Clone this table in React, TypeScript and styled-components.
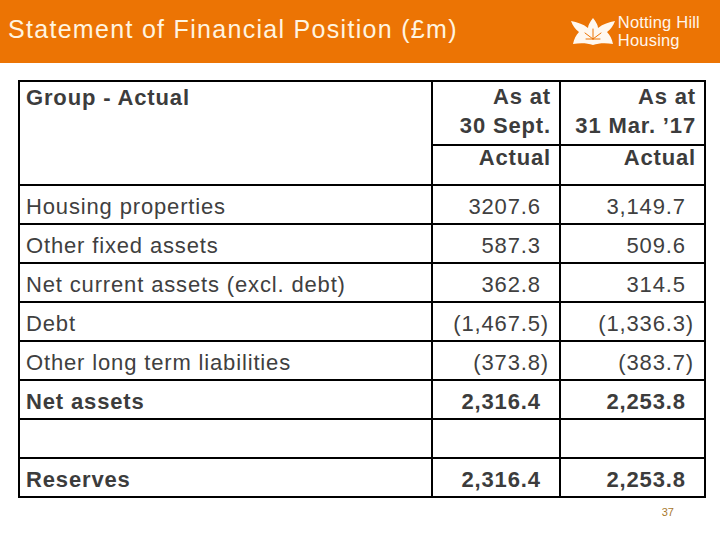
import styled, { createGlobalStyle } from 'styled-components';

const GlobalStyle = createGlobalStyle`
  html, body {
    margin: 0;
    padding: 0;
    background: #ffffff;
  }
`;

const Page = styled.div`
  width: 720px;
  height: 540px;
  background: #ffffff;
  overflow: hidden;
`;

const Header = styled.div`
  display: flex;
  align-items: center;
  justify-content: space-between;
  height: 63px;
  padding: 0 20px 0 8px;
  box-sizing: border-box;
  background: #ec7404;
`;

const Title = styled.h1`
  margin: 0 0 5px 0;
  font-family: "Liberation Sans", Arial, sans-serif;
  font-weight: 400;
  font-size: 25px;
  letter-spacing: 1.3px;
  color: #fff4e0;
`;

const Logo = styled.div`
  display: flex;
  align-items: center;
  gap: 3px;
  margin-top: 1px;
`;

const LogoText = styled.div`
  display: flex;
  flex-direction: column;
  font-family: "Liberation Sans", Arial, sans-serif;
  font-size: 16.5px;
  letter-spacing: 0.2px;
  color: #fff6ec;
  padding-bottom: 2px;
`;

const LogoLine = styled.div`
  height: 18.5px;
  line-height: 18.5px;
`;

const Table = styled.table`
  border-collapse: collapse;
  table-layout: fixed;
  width: 686px;
  margin: 17px 0 0 18px;
  font-family: "Liberation Sans", Arial, sans-serif;
  font-size: 22px;
  letter-spacing: 0.85px;
  color: #404040;
`;

const HeadRow = styled.tr<{ $h: number }>`
  height: ${(p) => p.$h}px;
`;

const BodyRow = styled.tr`
  height: 39px;
`;

const LabelHead = styled.th`
  border: 2px solid #000;
  text-align: left;
  vertical-align: top;
  font-weight: 700;
  line-height: 29px;
  padding: 1px 6px 0 6px;
  color: #3c3c3c;
`;

const NumHead = styled.th<{ $sub?: boolean }>`
  border: 2px solid #000;
  text-align: right;
  vertical-align: top;
  font-weight: 700;
  line-height: ${(p) => (p.$sub ? '22px' : '29px')};
  padding: ${(p) => (p.$sub ? '1px' : '0')} 8px 0 0;
  color: #3c3c3c;
  white-space: nowrap;
`;

const Label = styled.td<{ $bold?: boolean }>`
  border: 2px solid #000;
  padding: 4px 6px 0 6px;
  vertical-align: middle;
  font-weight: ${(p) => (p.$bold ? 700 : 400)};
  color: ${(p) => (p.$bold ? '#3c3c3c' : '#404040')};
  white-space: nowrap;
`;

const Num = styled.td<{ $bold?: boolean }>`
  border: 2px solid #000;
  padding: 4px 10px 0 0;
  text-align: right;
  vertical-align: middle;
  font-weight: ${(p) => (p.$bold ? 700 : 400)};
  color: ${(p) => (p.$bold ? '#3c3c3c' : '#404040')};
  white-space: nowrap;
`;

const ParenPad = styled.span`
  visibility: hidden;
`;

const Footer = styled.div`
  display: flex;
  justify-content: flex-end;
  padding: 8px 46px 0 0;
  font-family: "Liberation Sans", Arial, sans-serif;
  font-size: 11px;
  color: #a8782c;
`;

type Row = { label: string; sept: string; mar: string; bold?: boolean };

const rows: Row[] = [
  { label: 'Housing properties', sept: '3207.6', mar: '3,149.7' },
  { label: 'Other fixed assets', sept: '587.3', mar: '509.6' },
  { label: 'Net current assets (excl. debt)', sept: '362.8', mar: '314.5' },
  { label: 'Debt', sept: '(1,467.5)', mar: '(1,336.3)' },
  { label: 'Other long term liabilities', sept: '(373.8)', mar: '(383.7)' },
  { label: 'Net assets', sept: '2,316.4', mar: '2,253.8', bold: true },
  { label: '', sept: '', mar: '' },
  { label: 'Reserves', sept: '2,316.4', mar: '2,253.8', bold: true },
];

function Figure({ value }: { value: string }) {
  if (!value) return null;
  if (value.startsWith('(')) return <>{value}</>;
  return (
    <>
      {value}
      <ParenPad>)</ParenPad>
    </>
  );
}

function Flower() {
  return (
    <svg width="44" height="28" viewBox="0 0 44 28">
      <path
        d="M22 0 C25 4 27 7 27 10 C32 6 38 4 44 3 C42 8 40 11 36 14 C39 17 41 21 42 26 C35 25 28 25 22 27 C16 25 9 25 2 26 C3 21 5 17 8 14 C4 11 2 8 0 3 C6 4 12 6 17 10 C17 7 19 4 22 0 Z"
        fill="#fff8f0"
      />
      <g stroke="#ec7404" strokeWidth="1" fill="none" strokeLinecap="round">
        <path d="M22 21 V11" />
        <path d="M22 21 L14 15" />
        <path d="M22 21 L30 15" />
        <path d="M15 21 H29" />
      </g>
    </svg>
  );
}

export default function App() {
  return (
    <Page>
      <GlobalStyle />
      <Header>
        <Title>Statement of Financial Position (£m)</Title>
        <Logo>
          <Flower />
          <LogoText>
            <LogoLine>Notting Hill</LogoLine>
            <LogoLine>Housing</LogoLine>
          </LogoText>
        </Logo>
      </Header>
      <Table>
        <colgroup>
          <col style={{ width: 413 }} />
          <col style={{ width: 128 }} />
          <col style={{ width: 145 }} />
        </colgroup>
        <thead>
          <HeadRow $h={64}>
            <LabelHead rowSpan={2}>Group - Actual</LabelHead>
            <NumHead>
              As at
              <br />
              30 Sept.
            </NumHead>
            <NumHead>
              As at
              <br />
              31 Mar. ’17
            </NumHead>
          </HeadRow>
          <HeadRow $h={40}>
            <NumHead $sub>Actual</NumHead>
            <NumHead $sub>Actual</NumHead>
          </HeadRow>
        </thead>
        <tbody>
          {rows.map((r, i) => (
            <BodyRow key={i}>
              <Label $bold={r.bold}>{r.label}</Label>
              <Num $bold={r.bold}>
                <Figure value={r.sept} />
              </Num>
              <Num $bold={r.bold}>
                <Figure value={r.mar} />
              </Num>
            </BodyRow>
          ))}
        </tbody>
      </Table>
      <Footer>37</Footer>
    </Page>
  );
}
